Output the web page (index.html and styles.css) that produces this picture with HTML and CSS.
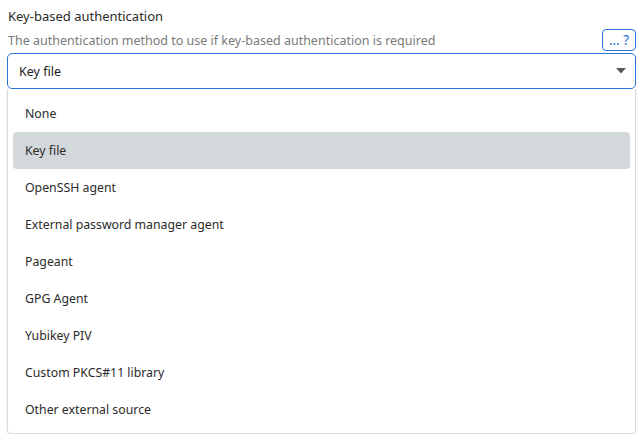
FILE: index.html
```html
<!DOCTYPE html>
<html>
<head>
<meta charset="utf-8">
<link rel="stylesheet" href="styles.css">
</head>
<body>
<div class="field">
  <div class="label">Key-based authentication</div>
  <div class="desc-row">
    <span class="desc">The authentication method to use if key-based authentication is required</span>
    <button class="help">... ?</button>
  </div>
  <div class="select">
    <span>Key file</span>
    <svg class="caret" width="10" height="6" viewBox="0 0 10 6"><path d="M0 0 H10 L5 5.5 Z" fill="#555"/></svg>
  </div>
  <ul class="menu">
    <li class="item">None</li>
    <li class="item active">Key file</li>
    <li class="item">OpenSSH agent</li>
    <li class="item">External password manager agent</li>
    <li class="item">Pageant</li>
    <li class="item">GPG Agent</li>
    <li class="item">Yubikey PIV</li>
    <li class="item">Custom PKCS#11 library</li>
    <li class="item">Other external source</li>
  </ul>
</div>
</body>
</html>
```
FILE: styles.css
```css
html, body {
  margin: 0;
  padding: 0;
  background: #fff;
}
body {
  font-family: "Noto Sans", "Segoe UI", sans-serif;
  font-size: 13px;
  color: #333;
}
.field {
  display: flex;
  flex-direction: column;
  padding: 6px 1px 0 7px;
}
.label {
  padding-left: 1px;
  line-height: 20px;
  color: #2b2b2b;
}
.desc-row {
  display: flex;
  align-items: flex-end;
  justify-content: space-between;
  padding-top: 3px;
}
.desc {
  padding-left: 1px;
  font-size: 12.5px;
  color: #7a7a7a;
  line-height: 18px;
  margin-bottom: 1px;
}
.help {
  font-family: inherit;
  font-size: 13.5px;
  color: #1f6fd1;
  background: #fff;
  border: 1px solid #2a73d4;
  border-radius: 4px;
  height: 22px;
  width: 34px;
  padding: 0 0 1px;
  line-height: 18px;
  box-sizing: border-box;
}
.select {
  box-sizing: border-box;
  margin-top: 2px;
  height: 36px;
  border: 1px solid #2a73d4;
  border-radius: 5px;
  display: flex;
  align-items: center;
  justify-content: space-between;
  padding: 0 9px 0 11px;
  color: #222;
  font-size: 12.5px;
}
.caret {
  display: block;
}
.menu {
  list-style: none;
  margin: 0;
  padding: 6px 5px 5px;
  border: 1px solid #d6dce0;
  border-top: none;
  border-radius: 0 0 4px 4px;
  box-shadow: 0 1px 3px rgba(0,0,0,0.08);
  font-size: 12.3px;
}
.item {
  height: 37px;
  line-height: 37px;
  padding-left: 12px;
  border-radius: 4px;
  color: #2b2b2b;
}
.item.active {
  background: #d3d8db;
}
```
